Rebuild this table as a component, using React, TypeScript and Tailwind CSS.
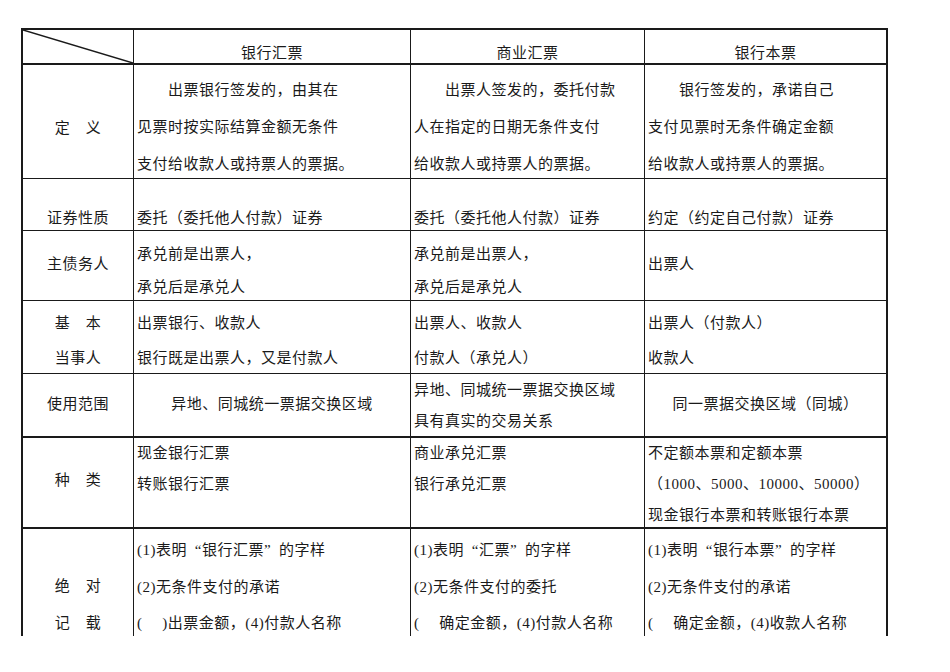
import type { ReactNode } from 'react';

// one table cell; the last column takes what is left
function Cell({ w, pad, center, lines }: { w: string; pad: string; center?: boolean; lines: ReactNode[] }) {
  return (
    <div className={`${w} shrink-0 border-r border-[#1a1a1a] last:border-r-0 h-full`}>
      <div className={`${pad} ${center ? 'text-center' : 'pl-[3px]'} whitespace-nowrap`}>
        {lines.map((l, i) => (
          <div key={i}>{l}</div>
        ))}
      </div>
    </div>
  );
}

// full-width quote marks, like the CJK ones in the original
const LQ = <span className="inline-block w-[1em] text-right">“</span>;
const RQ = <span className="inline-block w-[1em] text-left">”</span>;

const C0 = 'w-[111px]';
const C1 = 'w-[277px]';
const C2 = 'w-[234px]';
const C3 = 'flex-1';

export default function App() {
  return (
    <div className="min-h-screen bg-white pt-[28px] pl-[21px] text-[#1a1a1a] font-['Liberation_Serif','Noto_Sans_CJK_SC',serif] text-[15px] tracking-[0.5px]">
      <div className="w-[867px] h-[608px] overflow-hidden border-t-2 border-x-2 border-[#1a1a1a]">
        {/* header */}
        <div className="flex h-[35px] border-b-2 border-[#1a1a1a]">
          <div className={`${C0} shrink-0 border-r border-[#1a1a1a] relative`}>
            <svg className="absolute inset-0 w-full h-full" viewBox="0 0 110 33" preserveAspectRatio="none">
              <line x1="0" y1="0" x2="110" y2="33" stroke="#1a1a1a" strokeWidth="1.5" />
            </svg>
          </div>
          <Cell w={C1} pad="pt-[13px] leading-[20px]" center lines={['银行汇票']} />
          <Cell w={C2} pad="pt-[13px] leading-[20px]" center lines={['商业汇票']} />
          <Cell w={C3} pad="pt-[13px] leading-[20px]" center lines={['银行本票']} />
        </div>

        {/* 定义 */}
        <div className="flex h-[114px] border-b border-[#1a1a1a]">
          <Cell w={C0} pad="pt-[45px] leading-[37px]" center lines={['定　义']} />
          <Cell
            w={C1}
            pad="pt-[7px] leading-[37px]"
            lines={['　　出票银行签发的，由其在', '见票时按实际结算金额无条件', '支付给收款人或持票人的票据。']}
          />
          <Cell
            w={C2}
            pad="pt-[7px] leading-[37px]"
            lines={['　　出票人签发的，委托付款', '人在指定的日期无条件支付', '给收款人或持票人的票据。']}
          />
          <Cell
            w={C3}
            pad="pt-[7px] leading-[37px]"
            lines={['　　银行签发的，承诺自己', '支付见票时无条件确定金额', '给收款人或持票人的票据。']}
          />
        </div>

        {/* 证券性质 */}
        <div className="flex h-[52px] border-b border-[#1a1a1a]">
          <Cell w={C0} pad="pt-[29px] leading-[20px]" center lines={['证券性质']} />
          <Cell w={C1} pad="pt-[29px] leading-[20px]" lines={['委托（委托他人付款）证券']} />
          <Cell w={C2} pad="pt-[29px] leading-[20px]" lines={['委托（委托他人付款）证券']} />
          <Cell w={C3} pad="pt-[29px] leading-[20px]" lines={['约定（约定自己付款）证券']} />
        </div>

        {/* 主债务人 */}
        <div className="flex h-[70px] border-b border-[#1a1a1a]">
          <Cell w={C0} pad="pt-[23px] leading-[20px]" center lines={['主债务人']} />
          <Cell w={C1} pad="pt-[7px] leading-[33px]" lines={['承兑前是出票人，', '承兑后是承兑人']} />
          <Cell w={C2} pad="pt-[7px] leading-[33px]" lines={['承兑前是出票人，', '承兑后是承兑人']} />
          <Cell w={C3} pad="pt-[23px] leading-[20px]" lines={['出票人']} />
        </div>

        {/* 基本当事人 */}
        <div className="flex h-[73px] border-b border-[#1a1a1a]">
          <Cell w={C0} pad="pt-[5px] leading-[35px]" center lines={['基　本', '当事人']} />
          <Cell w={C1} pad="pt-[5px] leading-[35px]" lines={['出票银行、收款人', '银行既是出票人，又是付款人']} />
          <Cell w={C2} pad="pt-[5px] leading-[35px]" lines={['出票人、收款人', '付款人（承兑人）']} />
          <Cell w={C3} pad="pt-[5px] leading-[35px]" lines={['出票人（付款人）', '收款人']} />
        </div>

        {/* 使用范围 */}
        <div className="flex h-[64px] border-b-2 border-[#1a1a1a]">
          <Cell w={C0} pad="pt-[20px] leading-[20px]" center lines={['使用范围']} />
          <Cell w={C1} pad="pt-[20px] leading-[20px]" center lines={['异地、同城统一票据交换区域']} />
          <Cell w={C2} pad="pt-[1px] leading-[31px]" lines={['异地、同城统一票据交换区域', '具有真实的交易关系']} />
          <Cell w={C3} pad="pt-[20px] leading-[20px]" center lines={['同一票据交换区域（同城）']} />
        </div>

        {/* 种类 */}
        <div className="flex h-[91px] border-b-2 border-[#1a1a1a]">
          <Cell w={C0} pad="pt-[32px] leading-[20px]" center lines={['种　类']} />
          <Cell w={C1} pad="pt-0 leading-[31px]" lines={['现金银行汇票', '转账银行汇票']} />
          <Cell w={C2} pad="pt-0 leading-[31px]" lines={['商业承兑汇票', '银行承兑汇票']} />
          <Cell
            w={C3}
            pad="pt-0 leading-[31px]"
            lines={['不定额本票和定额本票', '（1000、5000、10000、50000）', '现金银行本票和转账银行本票']}
          />
        </div>

        {/* 绝对记载 */}
        <div className="flex h-[140px]">
          <Cell w={C0} pad="pt-[39px] leading-[36.5px]" center lines={['绝　对', '记　载']} />
          <Cell
            w={C1}
            pad="pt-[3px] leading-[36.5px]"
            lines={[<>(1)表明{LQ}银行汇票{RQ}的字样</>, '(2)无条件支付的承诺', '(　 )出票金额，(4)付款人名称']}
          />
          <Cell
            w={C2}
            pad="pt-[3px] leading-[36.5px]"
            lines={[<>(1)表明{LQ}汇票{RQ}的字样</>, '(2)无条件支付的委托', '(　 确定金额，(4)付款人名称']}
          />
          <Cell
            w={C3}
            pad="pt-[3px] leading-[36.5px]"
            lines={[<>(1)表明{LQ}银行本票{RQ}的字样</>, '(2)无条件支付的承诺', '(　 确定金额，(4)收款人名称']}
          />
        </div>
      </div>
    </div>
  );
}
